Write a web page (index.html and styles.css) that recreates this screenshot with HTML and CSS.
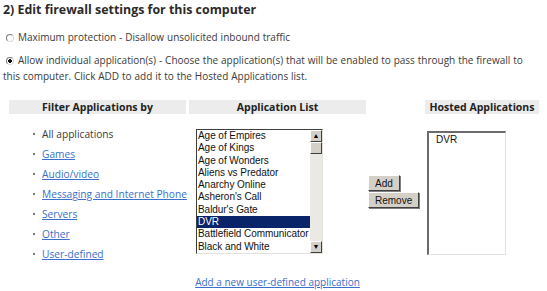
FILE: index.html
```html
<!DOCTYPE html>
<html lang="en">
<head>
    <meta charset="UTF-8">
    <title>Firewall settings</title>
    <link rel="stylesheet" href="styles.css">
</head>
<body>
    <h1 class="step-title">2) Edit firewall settings for this computer</h1>

    <label class="mode-option">
        <input type="radio" name="mode" value="max">
        Maximum protection - Disallow unsolicited inbound traffic
    </label>
    <label class="mode-option">
        <input type="radio" name="mode" value="individual" checked>
        Allow individual application(s) - Choose the application(s) that will be enabled to pass through the firewall to this computer. Click ADD to add it to the Hosted Applications list.
    </label>

    <div class="app-grid">
        <div class="col-head">Filter Applications by</div>
        <div class="col-head">Application List</div>
        <div></div>
        <div class="col-head">Hosted Applications</div>

        <ul class="filter-list">
            <li>All applications</li>
            <li><a href="#">Games</a></li>
            <li><a href="#">Audio/video</a></li>
            <li><a href="#">Messaging and Internet Phone</a></li>
            <li><a href="#">Servers</a></li>
            <li><a href="#">Other</a></li>
            <li><a href="#">User-defined</a></li>
        </ul>

        <div class="listbox">
            <ul class="listbox-items">
                <li>Age of Empires</li>
                <li>Age of Kings</li>
                <li>Age of Wonders</li>
                <li>Aliens vs Predator</li>
                <li>Anarchy Online</li>
                <li>Asheron's Call</li>
                <li>Baldur's Gate</li>
                <li class="selected">DVR</li>
                <li>Battlefield Communicator</li>
                <li>Black and White</li>
            </ul>
            <div class="scrollbar">
                <span class="scroll-btn">&#9650;</span>
                <span class="scroll-thumb"></span>
                <span class="scroll-track"></span>
                <span class="scroll-btn">&#9660;</span>
            </div>
        </div>

        <div class="move-buttons">
            <button type="button">Add</button>
            <button type="button">Remove</button>
        </div>

        <div class="hosted-box">
            <div class="hosted-item">DVR</div>
        </div>

        <div></div>
        <div class="add-link"><a href="#">Add a new user-defined application</a></div>
    </div>
</body>
</html>
```

FILE: styles.css
```css
body {
    font-family: "Open Sans", sans-serif;
    font-size: 10px;
    color: #3a3a3a;
    background: #fff;
    margin: 0;
    padding: 2px 0 0 3px;
}

a {
    color: #3a6fcb;
}

.step-title {
    font-size: 12.4px;
    line-height: 16px;
    font-weight: bold;
    color: #2b2b2b;
    margin: 0 0 11px;
}

.mode-option {
    display: block;
    width: 522px;
    line-height: 16px;
    margin-bottom: 7px;
    word-spacing: 0.3px;
}

.mode-option input {
    -webkit-appearance: none;
    appearance: none;
    width: 8px;
    height: 8px;
    margin: 0 1px 0 3px;
    border: 1px solid #7a7a7a;
    border-right-color: #d8d8d8;
    border-bottom-color: #d8d8d8;
    border-radius: 50%;
    background: #fff;
    vertical-align: -1px;
}

.mode-option input:checked {
    background: radial-gradient(circle, #111 0 1.7px, #fff 2.1px);
}

.app-grid {
    display: grid;
    grid-template-columns: 177px 177px 53px 114px;
    column-gap: 3px;
    margin: 16px 0 0 6px;
}

.col-head {
    background: #ececec;
    font-size: 10.5px;
    font-weight: bold;
    color: #222;
    text-align: center;
    line-height: 14px;
    height: 14px;
    white-space: nowrap;
}

.filter-list {
    list-style: none;
    margin: 10px 0 0;
    padding: 0 0 0 24px;
    line-height: 20px;
    white-space: nowrap;
    font-size: 10.2px;
}

.filter-list li::before {
    content: "";
    display: inline-block;
    width: 2px;
    height: 2px;
    background: #777;
    margin-right: 7px;
    vertical-align: 3px;
}

.listbox {
    display: flex;
    width: 125px;
    height: 123px;
    margin: 15px 0 0 7px;
    border: 1px solid #404040;
    border-right-color: #e4e2dc;
    border-bottom-color: #e4e2dc;
    background: #fff;
    font-family: "Liberation Sans", Arial, sans-serif;
    font-size: 10px;
    color: #111;
}

.listbox-items {
    flex: 1;
    list-style: none;
    margin: 0;
    padding: 0;
    overflow: hidden;
}

.listbox-items li {
    height: 12.3px;
    line-height: 12.3px;
    padding-left: 1px;
    white-space: nowrap;
    letter-spacing: -0.05px;
}

.listbox-items .selected {
    background: #0a246a;
    color: #fff;
}

.scrollbar {
    width: 12px;
    display: flex;
    flex-direction: column;
    background: #ebe9e3;
}

.scroll-btn,
.scroll-thumb {
    display: block;
    height: 10px;
    background: #d4d0c8;
    border: 1px solid #fff;
    border-right-color: #404040;
    border-bottom-color: #404040;
    font-size: 7px;
    line-height: 10px;
    text-align: center;
    color: #000;
    overflow: hidden;
}

.scroll-track {
    flex: 1;
}

.move-buttons {
    display: flex;
    flex-direction: column;
    align-items: flex-start;
    gap: 1px;
    margin: 61px 0 0 -1px;
}

.move-buttons button {
    font-family: "Liberation Sans", Arial, sans-serif;
    font-size: 10px;
    height: 16px;
    padding: 0 6px;
    color: #111;
    background: #d4d0c8;
    border: 1px solid #fff;
    border-right-color: #404040;
    border-bottom-color: #404040;
    box-shadow: 1px 1px 0 #808080;
}

.hosted-box {
    width: 76px;
    height: 121px;
    margin: 17px 0 0 2px;
    border: 2px solid #6b6b6b;
    border-right: 1px solid #e4e2dc;
    border-bottom: 1px solid #e4e2dc;
    background: #fff;
    font-family: "Liberation Sans", Arial, sans-serif;
    font-size: 10px;
    color: #111;
}

.hosted-item {
    padding: 1px 0 0 7px;
    line-height: 12px;
}

.add-link {
    grid-column: 2;
    text-align: center;
    margin-top: 11px;
    line-height: 14px;
}
```
